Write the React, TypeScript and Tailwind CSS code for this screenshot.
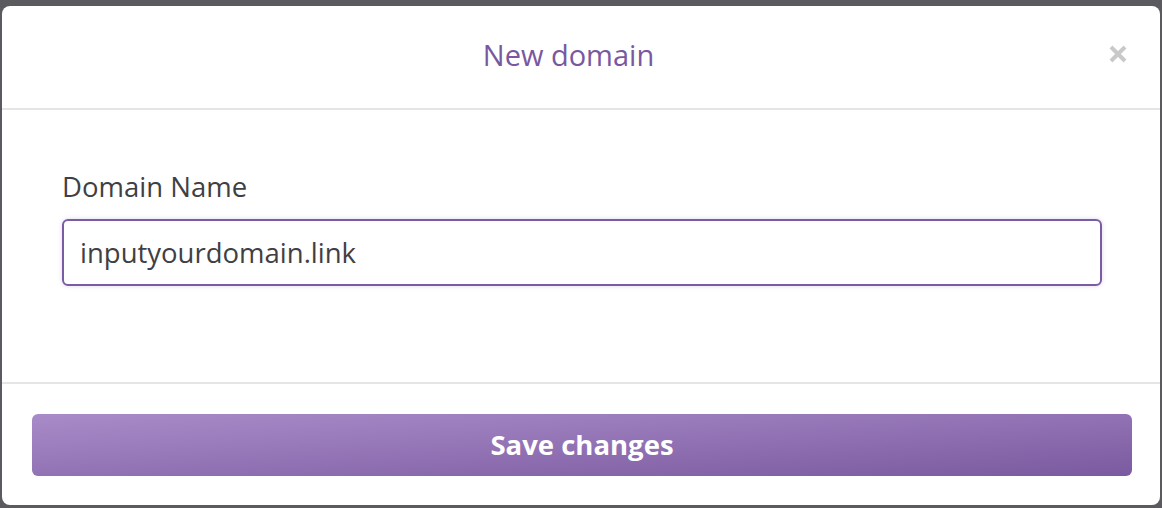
export default function App() {
  return (
    <div
      className="w-[1162px] h-[508px] bg-[#5b5a5f] pt-[6px] px-[2px] pb-[3px]"
      style={{ fontFamily: "'Open Sans', Lato, sans-serif" }}
    >
      <div className="h-full bg-white rounded-[8px] flex flex-col overflow-hidden">
        {/* Header */}
        <div className="h-[104px] shrink-0 border-b-2 border-[#e5e5e5] relative flex items-center justify-center pb-[6px] pr-[25px]">
          <h2 className="text-[29px] text-[#79589f] leading-none">New domain</h2>
          <button className="absolute right-[32px] top-[37px] w-[20px] h-[21px] flex items-center justify-center">
            <svg width="20" height="20" viewBox="0 0 20 20">
              <path d="M3 3 L17 17 M17 3 L3 17" stroke="#c9c9c9" strokeWidth="4" />
            </svg>
          </button>
        </div>

        {/* Body */}
        <div className="h-[274px] shrink-0 border-b-2 border-[#e5e5e5] pl-[60px] pr-[58px] pt-[61px]">
          <label className="block text-[27.5px] text-[#3f3f44] leading-[32px] mb-[16px]">Domain Name</label>
          <div className="h-[67px] border-2 border-[#7b5ba3] rounded-[6px] shadow-[0_0_4px_rgba(121,88,159,0.25)] flex items-center px-[16px]">
            <span className="text-[27.5px] text-[#3f3f44] leading-none">inputyourdomain.link</span>
          </div>
        </div>

        {/* Footer */}
        <div className="flex-1 pl-[30px] pr-[28px] pt-[30px]">
          <button className="w-full h-[62px] rounded-[6px] bg-gradient-to-br from-[#a98bc9] to-[#7b5a9f] text-white font-bold text-[27.5px] leading-none flex items-center justify-center">
            Save changes
          </button>
        </div>
      </div>
    </div>
  );
}
